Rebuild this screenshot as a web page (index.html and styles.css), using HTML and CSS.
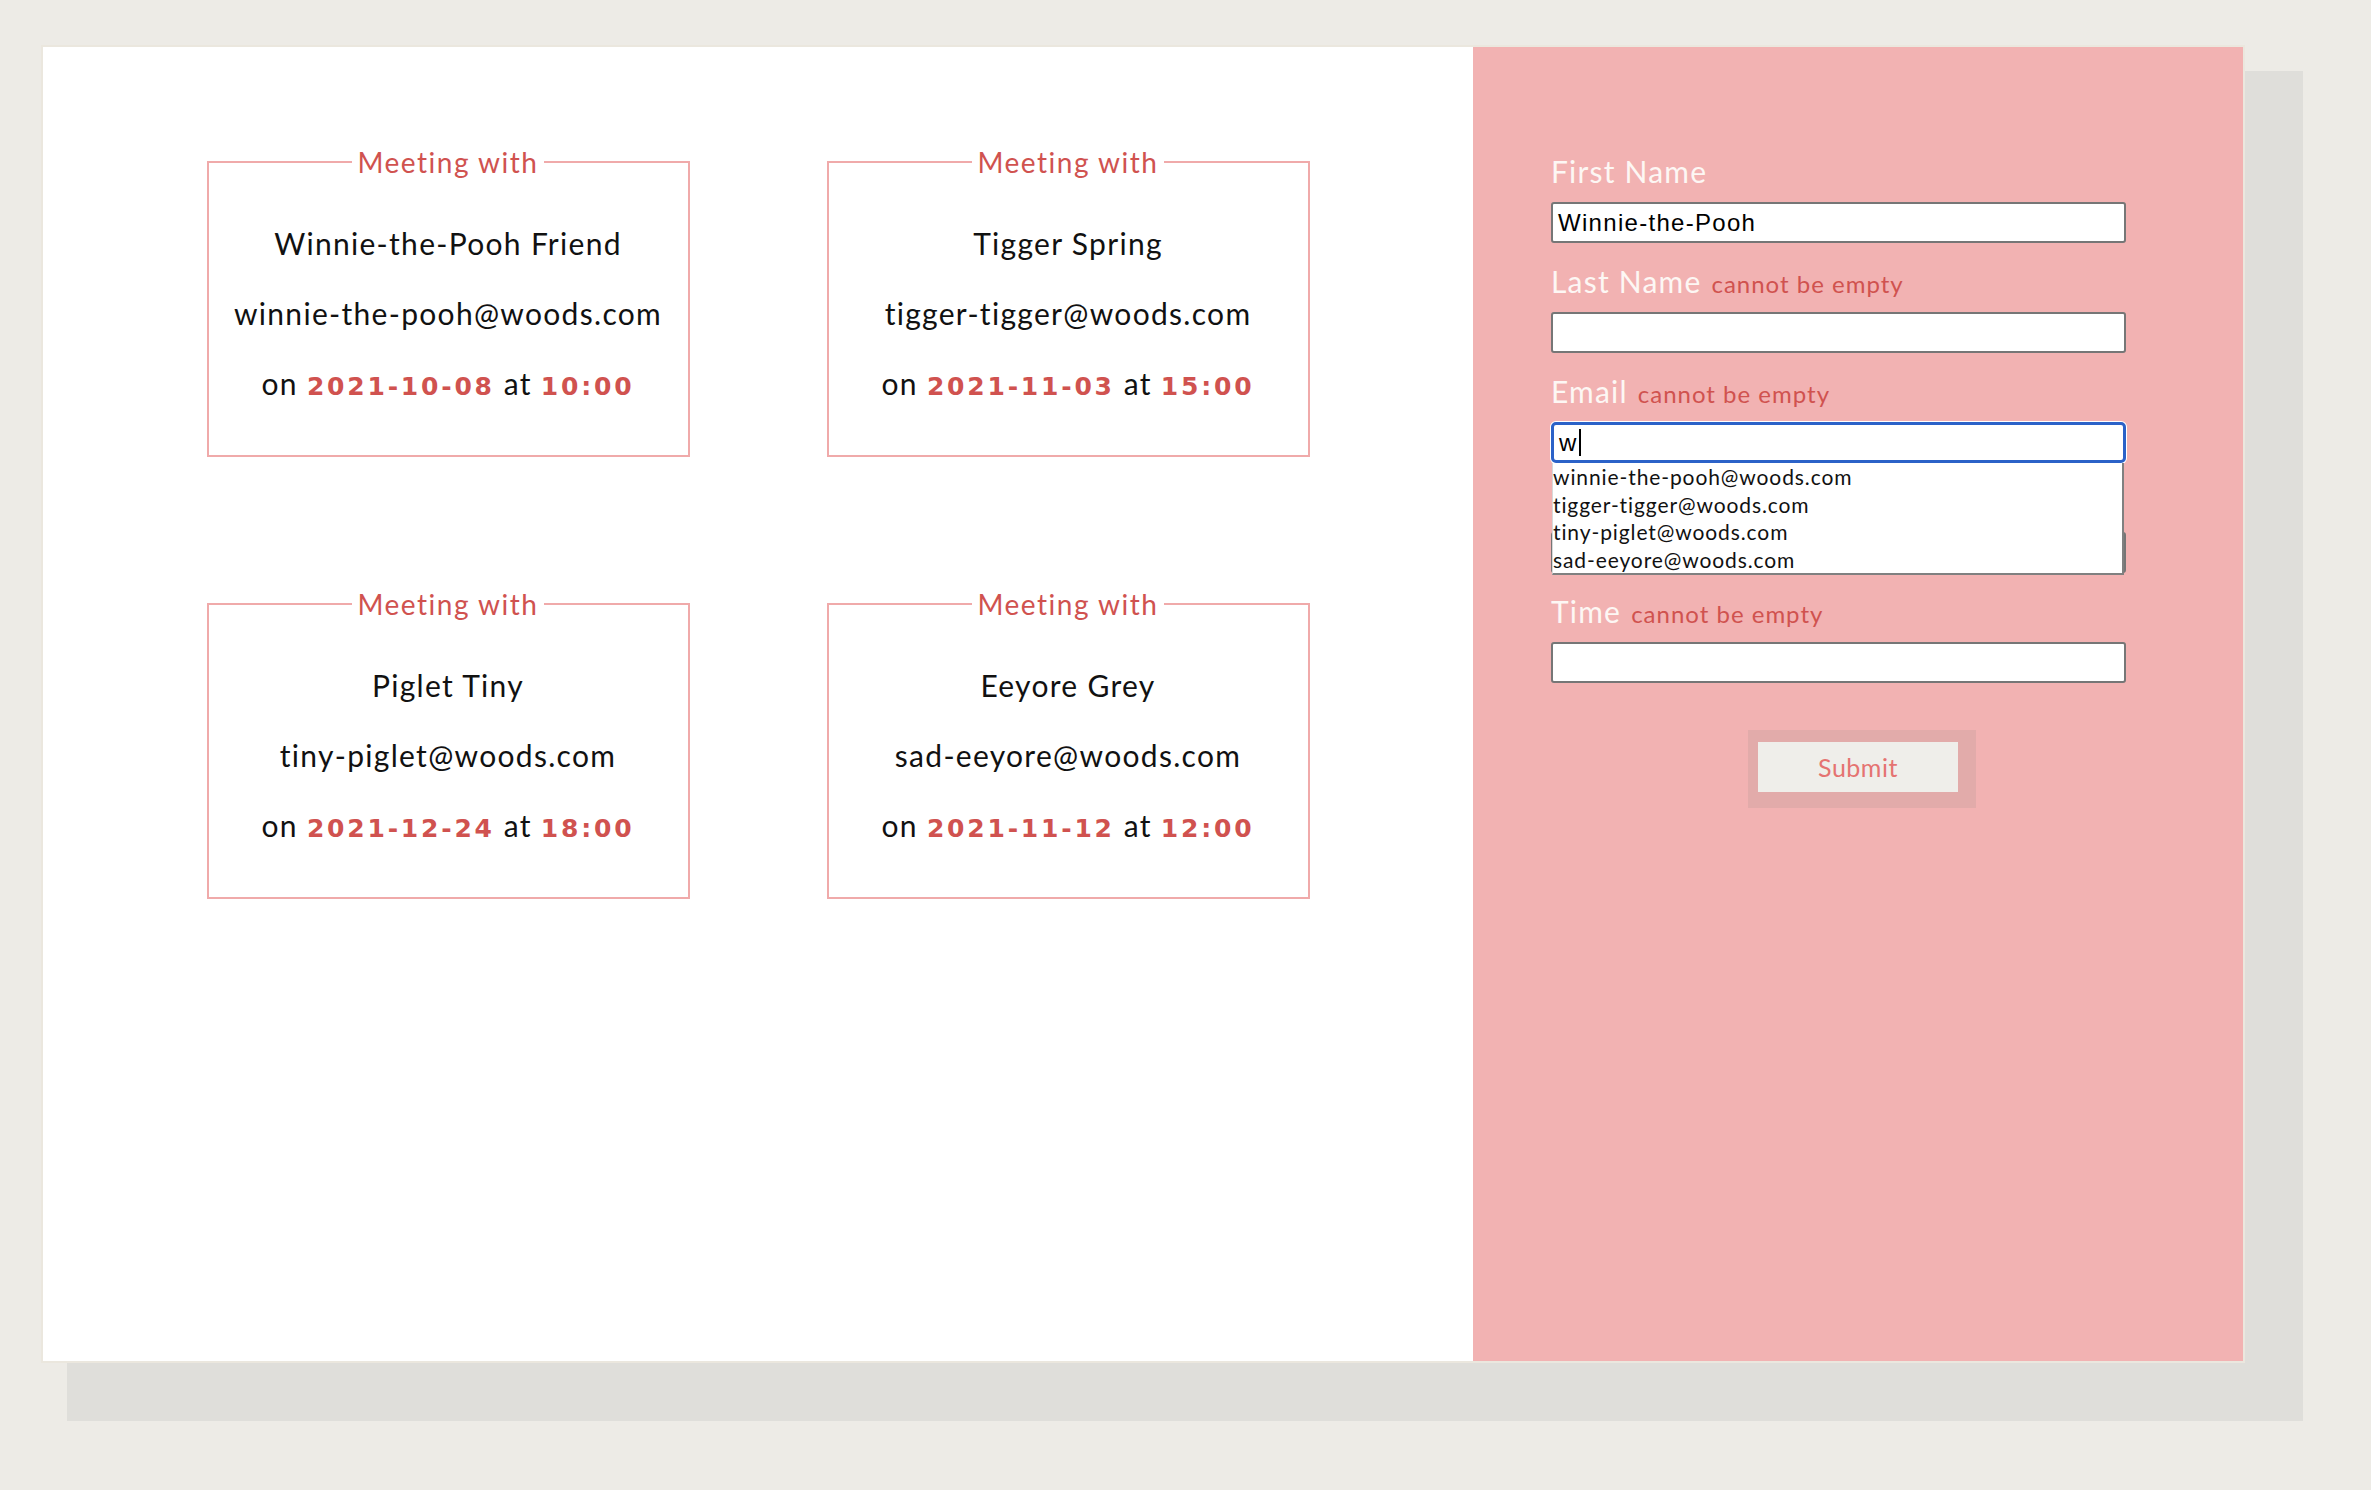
FILE: index.html
```html
<!DOCTYPE html>
<html lang="en">
<head>
<meta charset="utf-8">
<title>Meetings</title>
<link rel="stylesheet" href="styles.css">
</head>
<body>
<div class="app">
  <section class="meetings">
    <fieldset class="card">
      <legend>Meeting with</legend>
      <p>Winnie-the-Pooh Friend</p>
      <p>winnie-the-pooh@woods.com</p>
      <p>on <span class="hl">2021-10-08</span> at <span class="hl">10:00</span></p>
    </fieldset>
    <fieldset class="card">
      <legend>Meeting with</legend>
      <p>Tigger Spring</p>
      <p>tigger-tigger@woods.com</p>
      <p>on <span class="hl">2021-11-03</span> at <span class="hl">15:00</span></p>
    </fieldset>
    <fieldset class="card">
      <legend>Meeting with</legend>
      <p>Piglet Tiny</p>
      <p>tiny-piglet@woods.com</p>
      <p>on <span class="hl">2021-12-24</span> at <span class="hl">18:00</span></p>
    </fieldset>
    <fieldset class="card">
      <legend>Meeting with</legend>
      <p>Eeyore Grey</p>
      <p>sad-eeyore@woods.com</p>
      <p>on <span class="hl">2021-11-12</span> at <span class="hl">12:00</span></p>
    </fieldset>
  </section>
  <form class="form">
    <div class="field">
      <div class="label-row"><label class="label">First Name</label></div>
      <div class="input">Winnie-the-Pooh</div>
    </div>
    <div class="field">
      <div class="label-row"><label class="label">Last Name</label><span class="err">cannot be empty</span></div>
      <div class="input"></div>
    </div>
    <div class="field email-field">
      <div class="label-row"><label class="label">Email</label><span class="err">cannot be empty</span></div>
      <div class="input focused">w<span class="caret"></span></div>
      <ul class="suggest">
        <li>winnie-the-pooh@woods.com</li>
        <li>tigger-tigger@woods.com</li>
        <li>tiny-piglet@woods.com</li>
        <li>sad-eeyore@woods.com</li>
      </ul>
    </div>
    <div class="field">
      <div class="label-row"></div>
      <div class="input"></div>
    </div>
    <div class="field">
      <div class="label-row"><label class="label">Time</label><span class="err">cannot be empty</span></div>
      <div class="input"></div>
    </div>
    <div class="actions">
      <button type="button" class="submit">Submit</button>
    </div>
  </form>
</div>
</body>
</html>
```
FILE: styles.css
```css
html, body {
  margin: 0;
  padding: 0;
}
body {
  background: #edebe6;
  font-family: "Lato", "Liberation Sans", sans-serif;
  color: #111;
  padding: 45px 0 0 41px;
  height: 1490px;
  box-sizing: border-box;
}
.app {
  width: 2204px;
  height: 1318px;
  box-sizing: border-box;
  border: 2px solid #ebe7de;
  display: grid;
  grid-template-columns: 65% 35%;
  box-shadow: 42px 42px 0 16px #dfdeda;
}
.meetings {
  background: #fff;
  padding-top: 98px;
  display: grid;
  grid-template-columns: repeat(2, 483px);
  column-gap: 137px;
  row-gap: 130px;
  justify-content: center;
  align-content: start;
}
.card {
  margin: 0;
  border: 2px solid #f0aaaa;
  padding: 44px 0 48px;
  text-align: center;
  display: flex;
  flex-direction: column;
  gap: 30px;
}
.card legend {
  margin: 0 auto;
  padding: 0 6px;
  font-size: 28px;
  line-height: 34px;
  letter-spacing: 1.5px;
  color: #d0524f;
}
.card p {
  margin: 0;
  font-size: 30px;
  line-height: 40px;
  letter-spacing: 1.3px;
}
.hl {
  font-family: "DejaVu Sans", sans-serif;
  font-weight: bold;
  font-size: 25px;
  letter-spacing: 2.8px;
  color: #d0524f;
}
.form {
  background: #f2b2b2;
  padding: 106px 0 0 78px;
}
.field {
  position: relative;
  width: 575px;
  margin-bottom: 20px;
}
.label-row {
  display: flex;
  align-items: baseline;
  gap: 10px;
  height: 36px;
  line-height: 36px;
}
.label {
  font-size: 30px;
  letter-spacing: 1.2px;
  color: #fdf7f4;
}
.err {
  font-size: 24px;
  letter-spacing: 1px;
  color: #d0524f;
}
.input {
  margin-top: 13px;
  box-sizing: border-box;
  height: 41px;
  background: #fff;
  border: 2px solid #767676;
  border-radius: 3px;
  padding: 0 5px;
  font-family: "Liberation Sans", Arial, sans-serif;
  font-size: 24px;
  letter-spacing: 1.3px;
  line-height: 37px;
  color: #000;
}
.input.focused {
  border: 3px solid #2b62c8;
  border-radius: 5px;
  box-shadow: 0 0 0 1px #fff;
  line-height: 35px;
}
.caret {
  display: inline-block;
  width: 2px;
  height: 27px;
  background: #000;
  vertical-align: -5px;
  margin-left: 1px;
}
.suggest {
  position: absolute;
  left: 1px;
  top: 90px;
  width: 572px;
  box-sizing: border-box;
  margin: 0;
  padding: 0;
  list-style: none;
  background: #fff;
  border-right: 2px solid #808080;
  border-bottom: 2px solid #808080;
  border-left: 1px solid #d8d8d8;
  z-index: 2;
}
.suggest li {
  font-size: 21px;
  line-height: 27.5px;
  letter-spacing: 0.9px;
  color: #111;
}
.actions {
  display: flex;
  justify-content: center;
  width: 770px;
  margin-left: -78px;
  margin-top: 59px;
}
.submit {
  width: 200px;
  height: 50px;
  border: none;
  background: #efeeea;
  box-shadow: 4px 2px 0 14px #e2abaa;
  font-family: "Lato", sans-serif;
  font-size: 25px;
  letter-spacing: 0.5px;
  color: #e57371;
  padding: 0;
}
```
